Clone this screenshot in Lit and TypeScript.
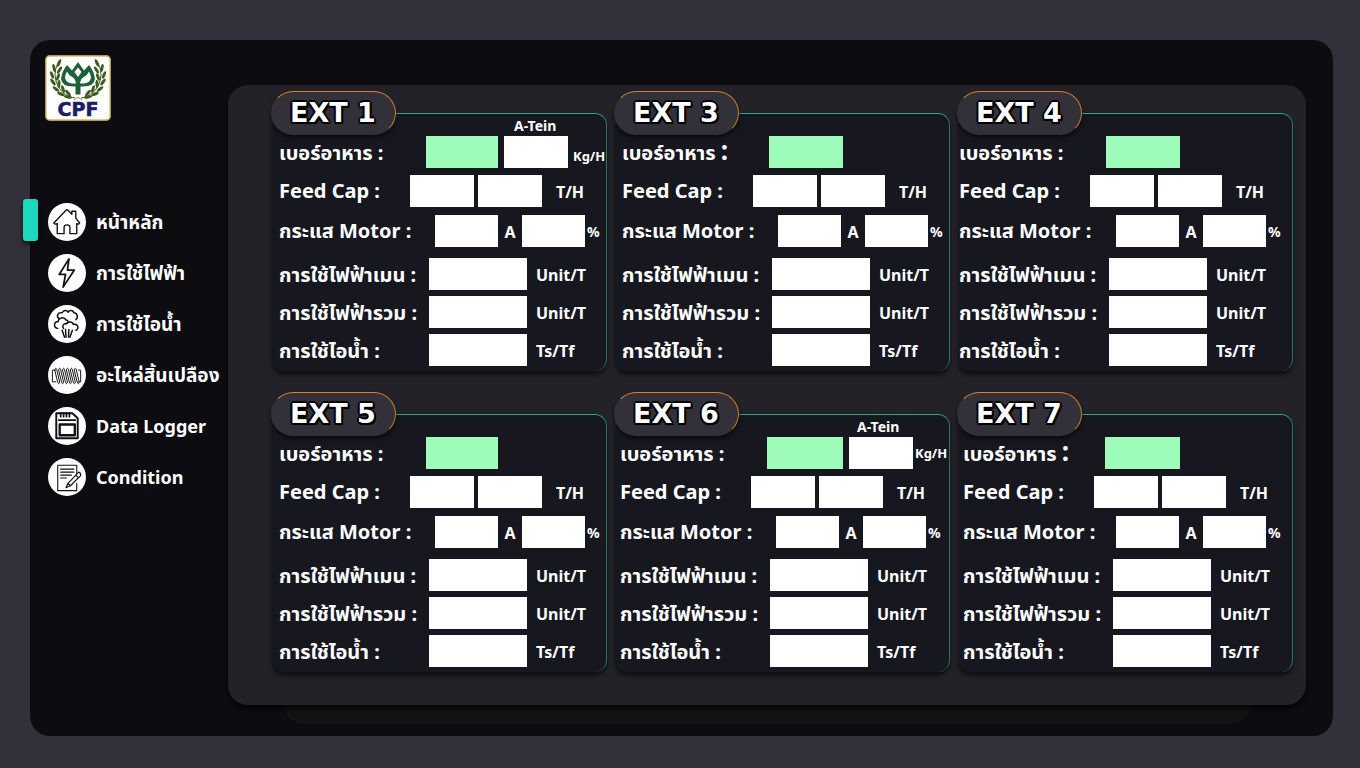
import { LitElement, html, svg, css, nothing } from "lit";
import { customElement, property } from "lit/decorators.js";

interface Station {
  id: number;
  indent: number;
  foodWidth: number;
  foodLabel: number;
  motorLabel: number;
  additive: boolean;
  largeColon?: boolean;
  raisedUnit?: boolean;
}

const stations: Station[] = [
  { id: 1, indent: 7, foodWidth: 72, foodLabel: 147, motorLabel: 156, additive: true },
  { id: 3, indent: 7, foodWidth: 74, foodLabel: 147, motorLabel: 156, additive: false, largeColon: true },
  { id: 4, indent: 1, foodWidth: 74, foodLabel: 147, motorLabel: 157, additive: false },
  { id: 5, indent: 7, foodWidth: 72, foodLabel: 147, motorLabel: 156, additive: false },
  { id: 6, indent: 5, foodWidth: 76, foodLabel: 147, motorLabel: 156, additive: true, raisedUnit: true },
  { id: 7, indent: 5, foodWidth: 75, foodLabel: 142, motorLabel: 153, additive: false, largeColon: true },
];

const leaf = (x: number, y: number, r: number) =>
  svg`<ellipse cx=${x} cy=${y} rx="1.5" ry="4" transform="rotate(${r} ${x} ${y})" />`;

const laurel = svg`
  ${leaf(14, 8, 25)}${leaf(9, 13, -12)}${leaf(14.5, 15, 32)}${leaf(7, 20, -22)}
  ${leaf(13, 22, 18)}${leaf(8, 27, -36)}${leaf(14, 29, 2)}${leaf(11, 34, -52)}
  ${leaf(18, 34, -18)}${leaf(16, 39, -68)}${leaf(23, 38, -40)}${leaf(23, 42, -80)}
  <path d="M13 8Q7 20 13 31T30 43" fill="none" stroke="#3d5a20" stroke-width="1" />`;

const petal = svg`<path d="M20 22Q20 27.500 27 28.500H31Q30.500 23.500 26.500 21.500Q23.500 20 22 16.500Q20.500 19 20 22Z" />`;

const logo = html`
  <svg class="logo" viewBox="0 0 66 66" role="img" aria-label="CPF">
    <rect x="0.7" y="0.7" width="64.6" height="64.6" rx="4" fill="#fefefc" stroke="#b89b45" stroke-width="1.4" />
    <g fill="#3d5a20">${laurel}<g transform="matrix(-1 0 0 1 66 0)">${laurel}</g></g>
    <path
      d="M16 24Q17 16 22 10L27 15.500L33 7L39 15.500L44 10Q49 16 50 24Q49 31.500 38 31.500H35.500V39.500H30.500V31.500H28Q17 31.500 16 24Z"
      fill="#1f6136"
    />
    <g fill="#fefefc">
      <path d="M33 12.500L36.500 17L33 22L29.500 17Z" />
      ${petal}<g transform="matrix(-1 0 0 1 66 0)">${petal}</g>
    </g>
    <path d="M29 45L33 42L37 45" fill="none" stroke="#b08a50" stroke-width="1" />
    <text x="33" y="61" text-anchor="middle" class="mark">CPF</text>
  </svg>`;

const icons = {
  home: svg`<path d="M6 20.5L18.5 7.5Q19.5 6.500 20.500 7.5L24.500 11.500V8.500H28.500V15.500L32.500 20.500Q31.500 22.500 29.500 21V31.500H22.500V25Q22.500 22.500 19.500 22.500T16.500 25V31.500H9.500V21Q7.500 22.500 6 20.500Z" stroke-width="1.4" />`,
  power: svg`<path d="M21.500 5L11.500 21H18L15.500 34L27 16.500H20Z" stroke-width="1.8" />`,
  steam: svg`<g stroke-width="1.5">
    <path d="M11.500 14C8 12 10 7 14.500 8C16 5 19.500 5 20.500 7.500C22 5 26 5 26.500 8C30 8 31.500 13 28.500 15" />
    <path d="M10 24C5.500 23.500 5.500 17 10.500 17C10.500 12.500 17 12 18.500 15.500C21 15 21 18.500 19.500 19" />
    <path d="M16 24C14 22 16 18.500 18.500 19.500C20 16.500 25.500 17 26 20C30 18.500 33 24 28.500 26" />
    <path d="M14.500 26L17 33M18 25L18.500 33M21.500 25L21 33M25 26L22.500 33" /></g>`,
  spring: svg`<path d="M7.500 14.500H4.500V26.500H8M31 14.500H33.500V26.500H31.500" stroke-width="1" />
    ${[8, 12, 16, 20, 24, 28].map(
      (x) => svg`<path d="M${x - 1} 14Q${x} 11 ${x + 1} 14L${x + 4} 27Q${x + 3} 30 ${x + 2} 27Z" stroke-width="1" />`
    )}`,
  card: svg`<path d="M8.500 6.500H25L30.500 11.500V32H8.500Z" stroke-width="2" />
    <path d="M13 6V10M16 6V10M19 6V10M22 6V10" stroke-width="1.8" />
    <path d="M11 13.500H28" stroke-width="1.6" />
    <rect x="12" y="18" width="15.500" height="11" stroke-width="2.4" />`,
  note: svg`<path d="M29.500 16V7.500H10V33.500H29.500V26" stroke-width="1.1" />
    <path d="M13 11.500H26.500M13 14.500H26.500M13 17.500H24M13 20.500H19" stroke-width="1.2" />
    <path d="M31.500 14.500Q34 15.500 33.500 18L23 28.500L18.500 30.500L20.500 26ZM28.500 17.500L31.500 20.500M20.500 26L23 28.500" stroke-width="1.2" />`,
};

const links = [
  { label: "หน้าหลัก", icon: icons.home, thai: true },
  { label: "การใช้ไฟฟ้า", icon: icons.power, thai: true },
  { label: "การใช้ไอน้ำ", icon: icons.steam, thai: true },
  { label: "อะไหล่สิ้นเปลือง", icon: icons.spring, thai: true },
  { label: "Data Logger", icon: icons.card, thai: false },
  { label: "Condition", icon: icons.note, thai: false },
];

@customElement("ext-card")
export class ExtCard extends LitElement {
  @property({ attribute: false }) station!: Station;

  static styles = css`
    :host {
      display: block;
      min-width: 0;
    }
    .card {
      margin-top: 22px;
      padding-bottom: 5px;
      border: 0 solid #2da58f;
      border-width: 1px 1px 0 0;
      border-right-color: #20796c;
      border-radius: 12px;
      background: #171720;
      box-shadow: 0 4px 4px rgba(0, 0, 0, 0.55);
    }
    .head {
      display: flex;
      align-items: flex-end;
      height: 44px;
      margin: -23px 0 0 -1px;
    }
    .badge {
      box-sizing: border-box;
      width: 125px;
      height: 44px;
      margin: 0;
      padding-left: 18px;
      border: 1px solid transparent;
      border-top-color: #d9822b;
      border-right-color: #c97a25;
      border-radius: 22px;
      background: #32313a;
      box-shadow: 0 3px 4px rgba(0, 0, 0, 0.6);
      font: bold 27px/42px "DejaVu Sans", sans-serif;
      white-space: nowrap;
      text-shadow: -2px 0 #000, 2px 0 #000, 0 -2px #000, 0 2px #000, -1px -1px #000, 1px -1px #000,
        -1px 2px #000, 2px 2px #000;
    }
    .additive {
      margin-left: 118px;
      font-size: 14px;
      line-height: 18px;
    }
    .rows {
      padding-top: 1px;
    }
    .row {
      display: flex;
      align-items: center;
      height: 32px;
      white-space: nowrap;
    }
    .row + .row {
      margin-top: 6px;
    }
    .row.feed {
      margin-top: 7px;
    }
    .row.motor {
      margin-top: 8px;
    }
    .row.mains {
      margin-top: 11px;
    }
    .name {
      flex: none;
      font-size: 20px;
      line-height: 28px;
    }
    .total .name,
    .food .name {
      padding-top: 2px;
    }
    .large {
      font-size: 26px;
      line-height: 20px;
    }
    .feed .name {
      width: 131px;
    }
    .total .name {
      width: 150px;
    }
    input {
      box-sizing: border-box;
      flex: none;
      height: 32px;
      margin: 0;
      padding: 0 6px;
      border: 0;
      border-radius: 0;
      background: #fff;
      font: 16px "Noto Sans", sans-serif;
    }
    .food input {
      background: #9dfcb9;
    }
    .food .extra {
      width: 64px;
      margin-left: 6px;
      background: #fff;
    }
    .feed input {
      width: 64px;
      margin-right: 4px;
    }
    .motor input {
      width: 63px;
    }
    .total input {
      width: 98px;
    }
    .unit {
      padding-top: 2px;
      font-size: 16px;
      line-height: 20px;
    }
    .feed .unit {
      margin-left: 10px;
    }
    .motor .unit {
      width: 24px;
      text-align: center;
    }
    .motor .percent {
      width: auto;
      margin-left: 2px;
      font-size: 14px;
    }
    .total .unit {
      margin-left: 9px;
    }
    .food .unit {
      margin-left: 5px;
      padding-top: 8px;
      font-size: 13px;
    }
    .food .raised {
      margin-left: 2px;
      padding: 0;
    }
  `;

  private total(key: string, name: string, unit: string, kind = "") {
    return html`<div class="row total ${kind}">
      <label class="name" for=${key}>${name} :</label>
      <input id=${key} type="text" />
      <span class="unit">${unit}</span>
    </div>`;
  }

  render() {
    const s = this.station;
    return html`<section class="card">
      <div class="head">
        <h2 class="badge">EXT ${s.id}</h2>
        ${s.additive ? html`<label class="additive" for="additive">A-Tein</label>` : nothing}
      </div>
      <div class="rows" style="padding-left:${s.indent}px">
        <div class="row food">
          <label class="name" for="food" style="width:${s.foodLabel}px"
            >เบอร์อาหาร ${s.largeColon ? html`<span class="large">:</span>` : ":"}</label
          >
          <input id="food" type="text" style="width:${s.foodWidth}px" />
          ${s.additive
            ? html`<input id="additive" class="extra" type="text" />
                <span class="unit ${s.raisedUnit ? "raised" : ""}">Kg/H</span>`
            : nothing}
        </div>
        <div class="row feed">
          <label class="name" for="feed">Feed Cap :</label>
          <input id="feed" type="text" />
          <input type="text" aria-label="Feed Cap T/H" />
          <span class="unit">T/H</span>
        </div>
        <div class="row motor">
          <label class="name" for="motor" style="width:${s.motorLabel}px">กระแส Motor :</label>
          <input id="motor" type="text" />
          <span class="unit">A</span>
          <input type="text" aria-label="กระแส Motor %" />
          <span class="unit percent">%</span>
        </div>
        ${this.total("mains", "การใช้ไฟฟ้าเมน", "Unit/T", "mains")}
        ${this.total("sum", "การใช้ไฟฟ้ารวม", "Unit/T")}
        ${this.total("steam", "การใช้ไอน้ำ", "Ts/Tf")}
      </div>
    </section>`;
  }
}

@customElement("app-root")
export class AppRoot extends LitElement {
  static styles = css`
    :host {
      display: block;
      box-sizing: border-box;
      min-height: 100vh;
      padding: 40px 27px 32px 30px;
      background: #32313b;
      color: #fff;
      font-family: "Noto Sans", "Noto Sans Thai", sans-serif;
      font-weight: 700;
    }
    .shell {
      display: grid;
      grid-template-columns: 198px minmax(0, 1fr);
      padding-right: 27px;
      border-radius: 20px;
      background: #0c0c11;
    }
    .logo {
      display: block;
      width: 66px;
      height: 66px;
      margin: 15px 0 0 15px;
    }
    .mark {
      fill: #1f1c66;
      stroke: #1f1c66;
      stroke-width: 0.6px;
      font: bold 19px "DejaVu Sans", sans-serif;
    }
    ul {
      display: grid;
      gap: 13px;
      margin: 82px 0 0;
      padding: 0;
      list-style: none;
    }
    .link {
      position: relative;
      display: flex;
      align-items: center;
      gap: 10px;
      padding-left: 18px;
      color: #fff;
      font-size: 18px;
      line-height: 26px;
      white-space: nowrap;
      text-decoration: none;
    }
    .thai {
      font-size: 19px;
    }
    .current::before {
      content: "";
      position: absolute;
      left: -7px;
      top: -4px;
      width: 15px;
      height: 42px;
      border-radius: 3px;
      background: #1cd9bd;
      box-shadow: 0 3px 4px rgba(0, 0, 0, 0.7);
    }
    .icon {
      flex: none;
      width: 38px;
      height: 38px;
      border-radius: 50%;
      background: #fff;
      fill: none;
      stroke: #111;
      stroke-linejoin: round;
      stroke-linecap: round;
    }
    .stage {
      padding: 45px 0 12px;
    }
    main {
      position: relative;
      display: grid;
      grid-template-columns: repeat(3, minmax(0, 1fr));
      gap: 21px 8px;
      padding: 6px 13px 33px 44px;
      border-radius: 20px;
      background: #232228;
      box-shadow: 0 4px 4px rgba(0, 0, 0, 0.6);
    }
    .ledge {
      height: 19px;
      margin: 0 56px;
      border-radius: 0 0 20px 20px;
      background: #131313;
    }
  `;

  render() {
    return html`<div class="shell">
      <nav>
        ${logo}
        <ul>
          ${links.map(
            (l, i) => html`<li>
              <a class="link ${i === 0 ? "current" : ""} ${l.thai ? "thai" : ""}" href="#">
                <svg class="icon" viewBox="0 0 39 39" aria-hidden="true">${l.icon}</svg>
                <span>${l.label}</span>
              </a>
            </li>`
          )}
        </ul>
      </nav>
      <div class="stage">
        <main>${stations.map((s) => html`<ext-card .station=${s}></ext-card>`)}</main>
        <div class="ledge"></div>
      </div>
    </div>`;
  }
}
